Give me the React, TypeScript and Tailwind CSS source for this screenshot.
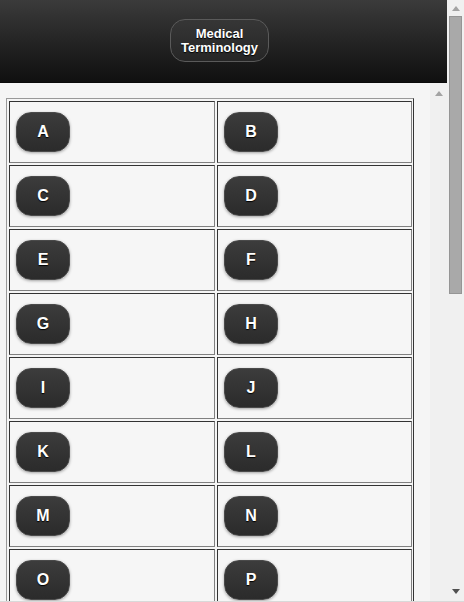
const letters = ["A", "B", "C", "D", "E", "F", "G", "H", "I", "J", "K", "L", "M", "N", "O", "P"];

const LetterButton = ({ letter }: { letter: string }) => (
  <button className="w-[54px] h-[40px] rounded-[15px] border border-[#4a4a4a] bg-gradient-to-b from-[#3c3c3c] to-[#2b2b2b] text-white font-bold text-[16px] leading-none [text-shadow:0_1px_1px_#000] shadow-[0_1px_3px_rgba(0,0,0,0.35)]">
    {letter}
  </button>
);

const Cell = ({ letter }: { letter: string }) => (
  <div className="h-[62px] flex items-center pl-[6px] bg-[#f6f6f6] border border-t-[#333] border-l-[#333] border-b-[#808080] border-r-[#808080]">
    <LetterButton letter={letter} />
  </div>
);

const Arrow = ({ up, color }: { up: boolean; color: string }) => (
  <svg width="8" height="5" viewBox="0 0 8 5">
    <polygon points={up ? "4,0 8,5 0,5" : "0,0 8,0 4,5"} fill={color} />
  </svg>
);

export default function App() {
  return (
    <div className="w-[464px] h-[602px] flex flex-col overflow-hidden bg-[#f0f0f0] font-['Liberation_Sans',Arial,sans-serif]">
      <div className="flex h-[601px]">
        <div className="w-[447px] flex flex-col">
          {/* header bar */}
          <header className="h-[83px] shrink-0 flex justify-center pr-[8px] pt-[19px] bg-gradient-to-b from-[#3b3b3b] to-[#101010] border-b border-[#0b0b0b]">
            <button className="w-[99px] h-[43px] rounded-[15px] border border-[#5a5a5a] bg-gradient-to-b from-[#363636] to-[#262626] text-white font-bold text-[13px] leading-[14px] [text-shadow:0_1px_1px_#000]">
              Medical
              <br />
              Terminology
            </button>
          </header>

          <div className="flex flex-1 min-h-0 bg-[#f5f5f5] overflow-hidden">
            <div className="flex-1 pl-[6px] pt-[15px]">
              <div className="w-[408px] grid grid-cols-[206px_195px] gap-[2px] pl-[2px] pr-[1px] pt-[2px] border border-t-[#999] border-l-[#999] border-r-[#333] border-b-[#333]">
                {letters.map((l) => (
                  <Cell key={l} letter={l} />
                ))}
              </div>
            </div>
            {/* inner scroll column */}
            <div className="w-[17px] bg-[#f0f0f0] flex justify-center pt-[8px]">
              <Arrow up color="#a3a3a3" />
            </div>
          </div>
        </div>

        {/* page scrollbar */}
        <div className="w-[17px] flex flex-col items-center bg-[#f0f0f0]">
          <div className="h-[16px] flex items-center justify-center">
            <Arrow up color="#a3a3a3" />
          </div>
          <div className="w-[13px] h-[278px] bg-[#a9a9a9] border border-[#959595]" />
          <div className="flex-1" />
          <div className="h-[20px] flex items-center justify-center">
            <Arrow up={false} color="#505050" />
          </div>
        </div>
      </div>
      <div className="h-[1px] bg-[#d9d9d9]" />
    </div>
  );
}
